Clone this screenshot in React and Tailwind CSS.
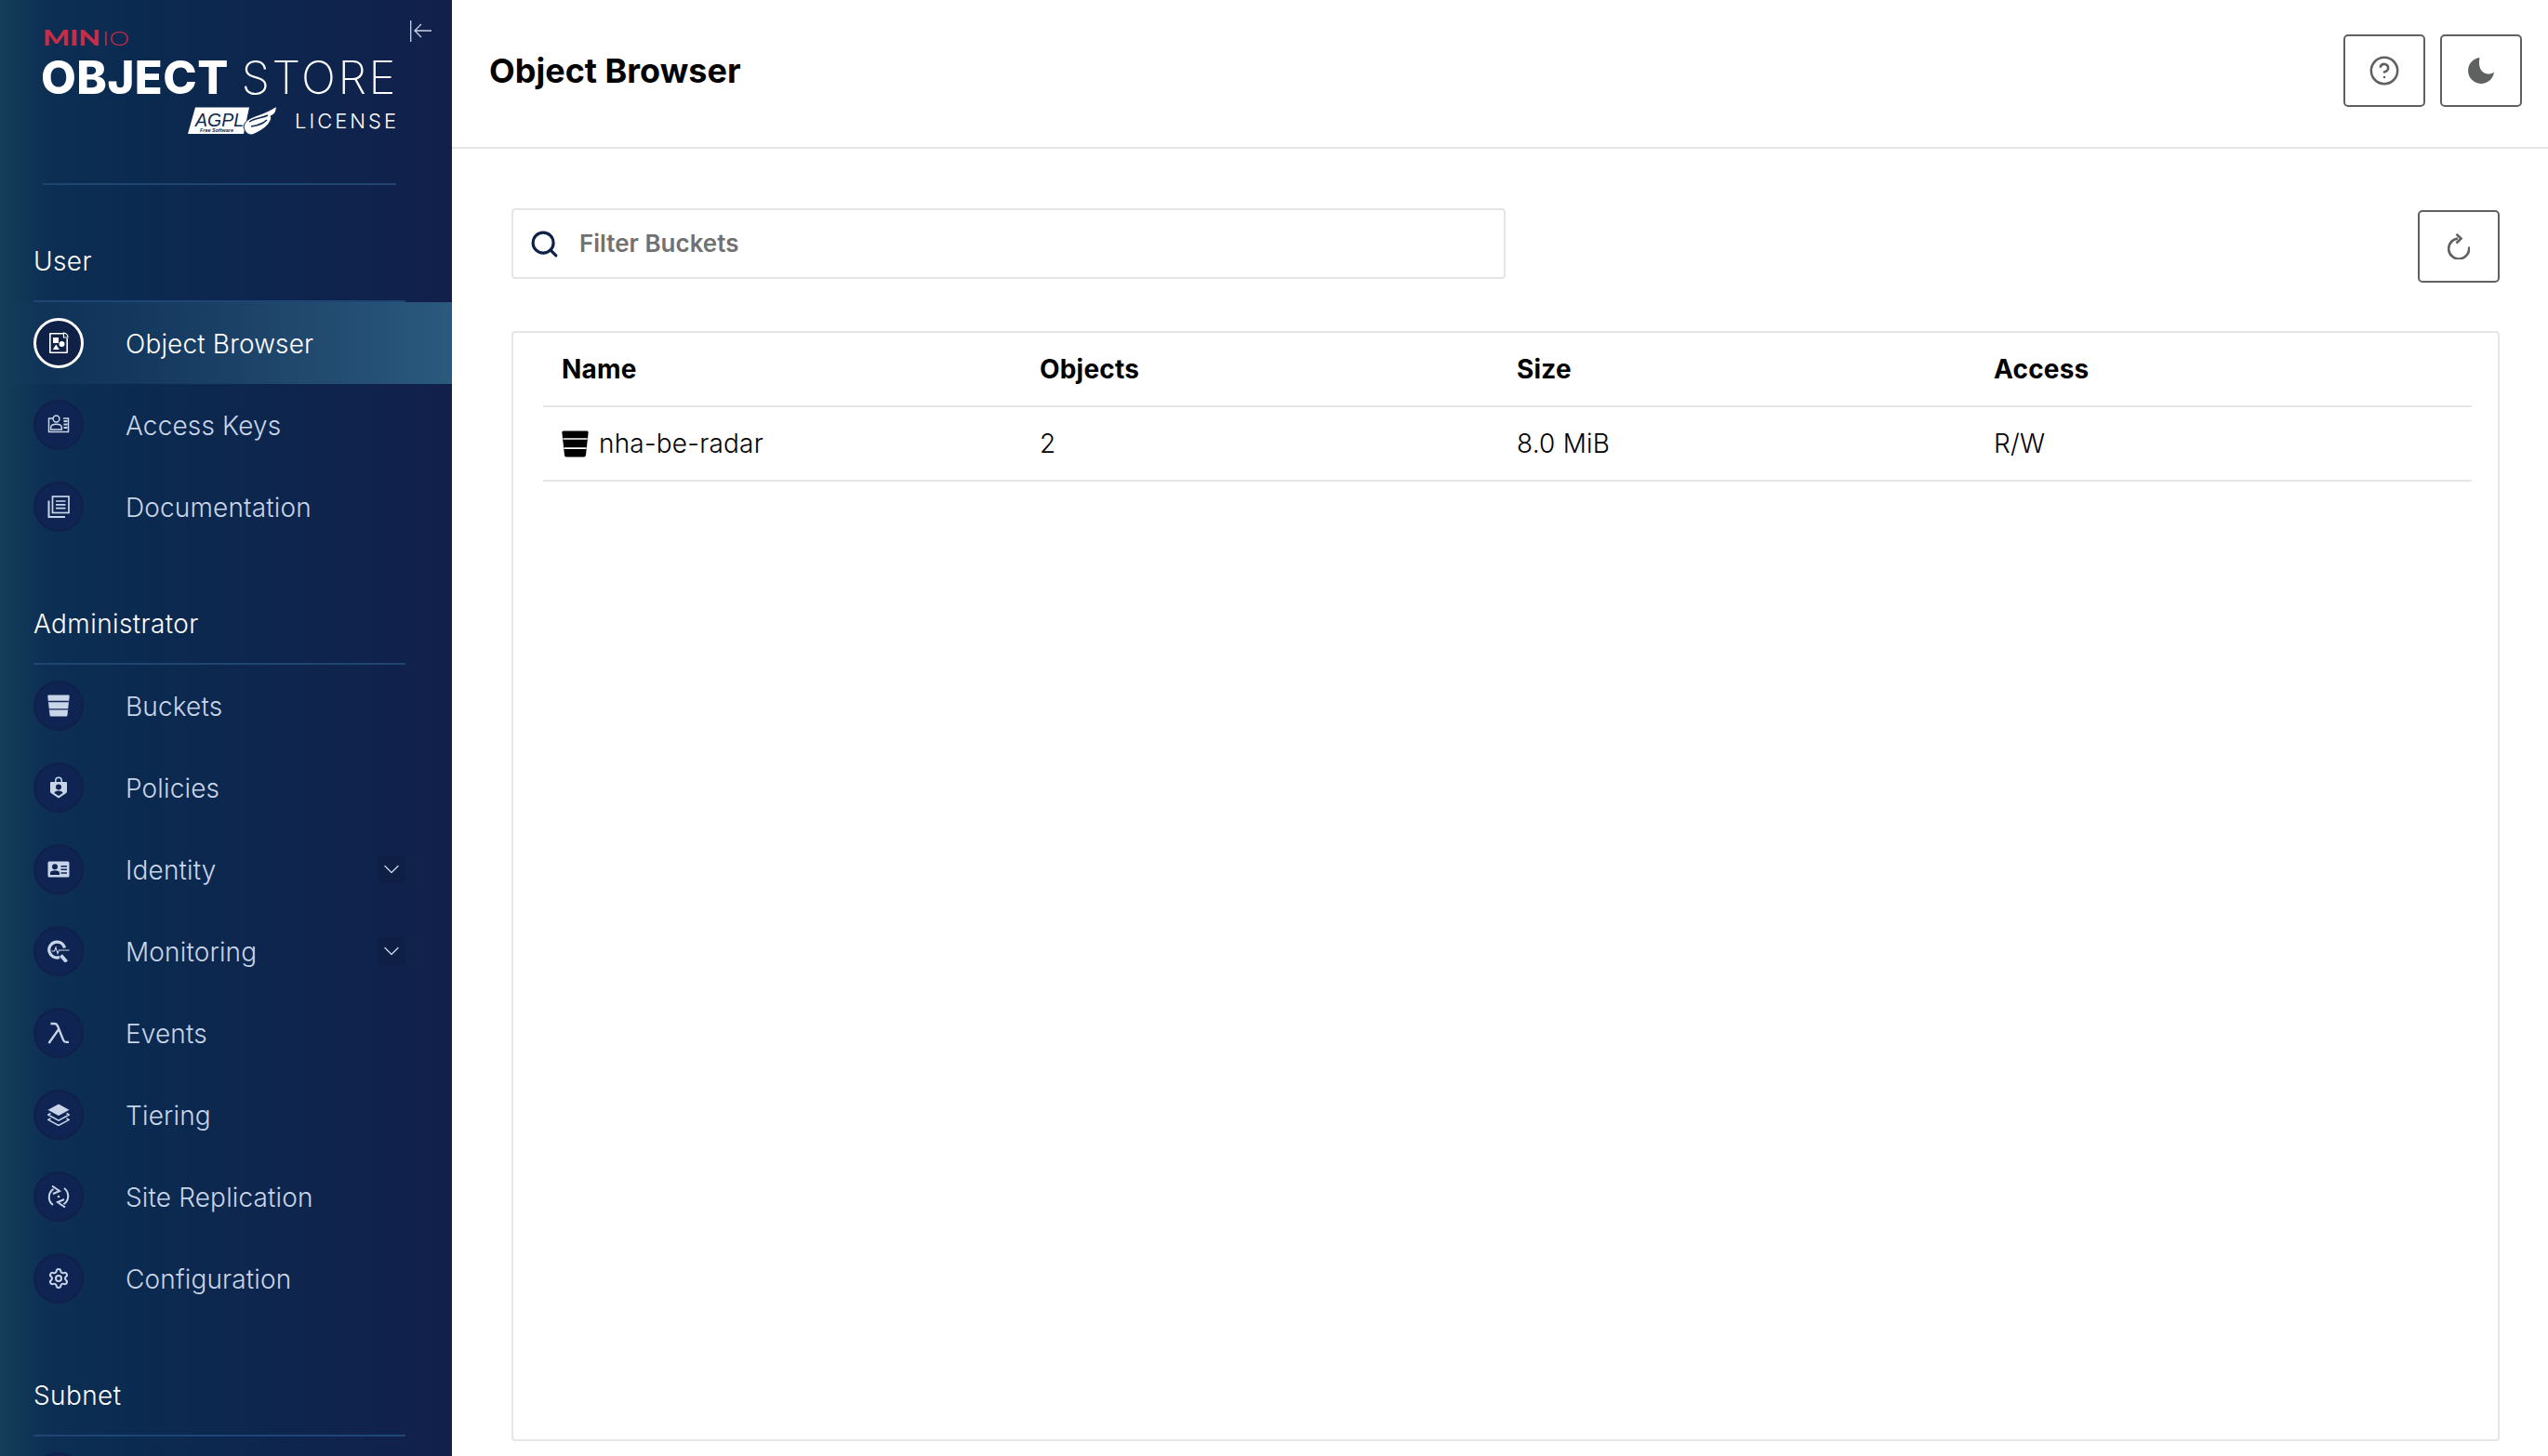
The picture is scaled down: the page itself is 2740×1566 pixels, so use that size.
import React from 'react';
import { ChevronDown, Search, Settings, CircleHelp } from 'lucide-react';

const BucketIcon = ({ className, line }) => (
  <svg viewBox="0 0 24 24" className={className}>
    <path d="M1.500.5h21c.8 0 1.300.6 1.200 1.400l-2.200 20c-.1 1-.8 1.600-1.700 1.600H4.200c-.9 0-1.600-.6-1.700-1.600L.3 1.900C.2 1.100.7.5 1.500.5z" fill="currentColor" />
    <path d="M1.200 7.500h21.600M2 15.800h20" stroke={line} strokeWidth="1.300" fill="none" />
  </svg>
);

const ObjectIcon = ({ className }) => (
  <svg viewBox="0 0 24 24" className={className} fill="currentColor">
    <path d="M2 1h15.500v1.600H3.600v18.800h16.800V7H22v15a1 1 0 0 1-1 1H3a1 1 0 0 1-1-1V2a1 1 0 0 1 1-1z" />
    <path d="M17.500 1.200a4.500 4.500 0 0 1 4.500 4.800h-4.500z" fill="none" stroke="currentColor" strokeWidth="1.200" />
    <rect x="6" y="6" width="6" height="6" />
    <circle cx="15.500" cy="13" r="3" />
    <path d="M9.300 13.500l3.500 5.500H5.800z" />
  </svg>
);

const KeysIcon = ({ className }) => (
  <svg viewBox="0 0 24 24" className={className} fill="none" stroke="currentColor" strokeWidth="1.500">
    <path d="M6 5H1.500v14.500h21V5H17" />
    <circle cx="9.500" cy="5.500" r="3.400" />
    <path d="M3.700 17v-2.200c0-2.200 2.400-3.600 5.800-3.600s5.800 1.400 5.800 3.600V17z" />
    <path d="M17.500 8h4M17.500 11.500h4M17.500 15h4" strokeWidth="1.800" />
  </svg>
);

const DocsIcon = ({ className }) => (
  <svg viewBox="0 0 24 24" className={className} fill="none" stroke="currentColor" strokeWidth="1.700">
    <rect x="5.500" y="1" width="17.500" height="17.500" />
    <path d="M9 6h10.500M9 9.800h10.500M9 13.600h10.500" />
    <path d="M1.500 5.500v17.500h17.500" strokeWidth="2" />
  </svg>
);

const PolicyIcon = ({ className }) => (
  <svg viewBox="0 0 24 24" className={className} fill="currentColor">
    <path d="M8 6V4.600a4 4 0 0 1 8 0V6h-1.500V4.600a2.500 2.500 0 0 0-5 0V6z" />
    <path fillRule="evenodd" d="M4 6h16c.6 0 1 .4 1 1v9.500c0 .6-.3 1.100-.8 1.400L12 23.500 3.800 17.900c-.5-.3-.8-.8-.8-1.400V7c0-.6.4-1 1-1zm8 2.500a3 3 0 1 0 0 6 3 3 0 0 0 0-6zm0 7c-2.800 0-4.500 1-4.500 2.500L12 21l4.500-3c0-1.500-1.700-2.500-4.500-2.500z" />
  </svg>
);

const IdentityIcon = ({ className }) => (
  <svg viewBox="0 0 24 24" className={className} fill="currentColor">
    <path fillRule="evenodd" d="M2 3.500h20a1.500 1.500 0 0 1 1.500 1.500v14a1.500 1.500 0 0 1-1.500 1.500H2A1.500 1.500 0 0 1 .5 19V5A1.500 1.500 0 0 1 2 3.500zM8 6.200a3 3 0 1 0 0 6 3 3 0 0 0 0-6zm0 7c-3.200 0-5 1-5 2.800v2h10v-2c0-1.800-1.800-2.800-5-2.800zM14.500 8v1.500H21V8zm0 3.600v1.500H21v-1.500zm0 3.600v1.500H21v-1.500z" />
  </svg>
);

const MonitorIcon = ({ className }) => (
  <svg viewBox="0 0 24 24" className={className} fill="none" stroke="currentColor">
    <path d="M18.500 8.500A8.500 8.500 0 1 0 13 18.600" strokeWidth="3.200" />
    <path d="M14.500 16.500l6 7" strokeWidth="3.800" />
    <path d="M4.500 12h3l1.500-4 2 6.500 1.500-3.500h11" strokeWidth="1.100" />
  </svg>
);

const LambdaIcon = ({ className }) => (
  <svg viewBox="0 0 24 24" className={className} fill="none" stroke="currentColor" strokeWidth="2.300">
    <path d="M3.500 2h4.500c1.500 0 2.200.7 2.900 2.300L17 19.500c.7 1.600 1.500 2.300 2.800 2.300H23M11.800 8.500L1.500 23" />
  </svg>
);

const TierIcon = ({ className }) => (
  <svg viewBox="0 0 24 24" className={className}>
    <path d="M12 .5L23.500 6.700 12 13 .5 6.700z" fill="currentColor" />
    <path d="M3.500 10.500L.8 12 12 18.200 23.200 12l-2.700-1.500M3.500 16L.8 17.400 12 23.500l11.200-6.100L20.500 16" fill="none" stroke="currentColor" strokeWidth="1.500" />
  </svg>
);

const ReplicationIcon = ({ className }) => (
  <svg viewBox="0 0 24 24" className={className} fill="none" stroke="currentColor" strokeWidth="2">
    <path d="M6.500 3.800A10.500 10.500 0 0 0 6 21M17.500 20.200A10.500 10.500 0 0 0 18 3" />
    <path d="M5 .5l8 5.500-7 3M19 23.500l-8-5.500 7-3" strokeWidth="2" />
    <circle cx="12" cy="12" r="1.300" fill="currentColor" stroke="none" />
  </svg>
);

const CollapseIcon = () => (
  <svg viewBox="0 0 23 23" className="absolute left-[441px] top-[22px] w-[23px] h-[23px] text-[#c8d5e8]" fill="none" stroke="currentColor" strokeWidth="1.300">
    <path d="M.7 0v23M23 11H5M12 4l-7 7 7 7" />
  </svg>
);

const MoonIcon = ({ className }) => (
  <svg viewBox="0 0 28 28" className={className} fill="currentColor">
    <path d="M12.500 0a14 14 0 1 0 15.500 15.500C25.500 17.500 22.500 18 20 17.300 14 16 10.500 10 12.500 0z" />
  </svg>
);

const RefreshIcon = ({ className }) => (
  <svg viewBox="0 0 24 28" className={className} fill="none" stroke="currentColor" strokeWidth="2.600">
    <path d="M11 5.500A11 11 0 1 0 23 14.500" />
    <path d="M9.500 .8L14.500 5.500 9.500 10.500" />
  </svg>
);

const LogoMark = () => (
  <div className="flex flex-col w-[380px] text-white">
    <svg viewBox="0 0 92 24" className="w-[92px] h-[24px] -mt-[4px] text-[#c72c48] overflow-visible">
      <text x="0" y="19.500" fontFamily="Lato, sans-serif" fontWeight="900" fontSize="22" fill="currentColor" textLength="62" lengthAdjust="spacingAndGlyphs">MIN</text>
      <text x="64" y="19.500" fontFamily="Lato, sans-serif" fontWeight="300" fontSize="22" fill="currentColor" textLength="29" lengthAdjust="spacingAndGlyphs">IO</text>
    </svg>
    <div className="flex items-center justify-between mt-[9px] -ml-[2px] -mr-[2px] h-[44px] leading-[44px] text-[49px] whitespace-nowrap">
      <span className="font-extrabold tracking-[0.5px]">OBJECT</span>
      <span className="font-extralight tracking-[2.500px]">STORE</span>
    </div>
    <div className="flex items-center justify-end mt-[8px] h-[32px] -mr-[3px]">
      <svg viewBox="0 0 96 32" className="w-[96px] h-[32px]">
        <path d="M8 1.500h58L60 30H0z" fill="#fff" />
        <text x="8" y="22" fontFamily="Liberation Sans, sans-serif" fontStyle="italic" fontSize="20" fill="#0d2a50" textLength="52" lengthAdjust="spacingAndGlyphs">AGPL</text>
        <text x="13" y="28" fontFamily="Liberation Sans, sans-serif" fontStyle="italic" fontWeight="700" fontSize="4.500" fill="#0d2a50" textLength="36" lengthAdjust="spacingAndGlyphs">Free Software</text>
        <path d="M60 22C63 10 78 12 95 .5c1 6-3 9-6 10.500 2 3-2 13-20 20-5 0-8-3-9-9z" fill="#fff" stroke="#0d2a50" strokeWidth="1" />
        <path d="M66 17c6-4 14-4 20-7M68 22c6-1 12-2 17-7" fill="none" stroke="#0d2a50" strokeWidth="1.500" />
      </svg>
      <span className="ml-[19px] text-[22px] leading-[30px] font-light tracking-[3px]">LICENSE</span>
    </div>
  </div>
);

const NavItem = ({ icon: Icon, label, active, expandable }) => (
  <div className={`flex items-center h-[88px] pl-[36px] pr-[50px] ${active ? 'bg-gradient-to-r from-transparent to-[#2a5a7e] text-white' : 'text-[#c8d5e8]'}`}>
    <div className={`flex items-center justify-center w-[54px] h-[54px] rounded-full shrink-0 ${active ? 'bg-[#0f2147] border-[3px] border-white' : 'bg-[#0f2452] border-[2px] border-[#0e2149]'}`}>
      <Icon className="w-[24px] h-[24px]" />
    </div>
    {label && <span className={`ml-[45px] mt-[2px] text-[28px] font-light tracking-[0.15px] whitespace-nowrap ${active ? 'text-white' : ''}`}>{label}</span>}
    {expandable && (
      <div className="ml-auto flex items-center justify-center w-[30px] h-[30px] rounded-[3px] bg-[#0e1e44]">
        <ChevronDown className="w-[28px] h-[28px]" strokeWidth={1.200} />
      </div>
    )}
  </div>
);

const Section = ({ title, items }) => (
  <div className="mt-[61px]">
    <div className="px-[36px] h-[40px] leading-[42px] text-[28px] font-light tracking-[0.4px] text-white">{title}</div>
    <div className="mx-[36px] mt-[23px] w-[400px] h-[2px] bg-[#1f4672]" />
    {items.map((item, i) => (
      <NavItem key={i} {...item} />
    ))}
  </div>
);

const userItems = [
  { label: 'Object Browser', icon: ObjectIcon, active: true },
  { label: 'Access Keys', icon: KeysIcon },
  { label: 'Documentation', icon: DocsIcon },
];

const BucketNavIcon = ({ className }) => <BucketIcon className={className} line="#0f2452" />;

const adminItems = [
  { label: 'Buckets', icon: BucketNavIcon },
  { label: 'Policies', icon: PolicyIcon },
  { label: 'Identity', icon: IdentityIcon, expandable: true },
  { label: 'Monitoring', icon: MonitorIcon, expandable: true },
  { label: 'Events', icon: LambdaIcon },
  { label: 'Tiering', icon: TierIcon },
  { label: 'Site Replication', icon: ReplicationIcon },
  { label: 'Configuration', icon: Settings },
];

const IconButton = ({ children }) => (
  <button className="flex items-center justify-center w-[88px] h-[78px] rounded-[5px] border-2 border-[#5e6160] text-[#5e6160] bg-white">
    {children}
  </button>
);

const columns = ['Name', 'Objects', 'Size', 'Access'];

const App = () => {
  return (
    <div className="flex w-full h-screen overflow-hidden bg-white font-[Inter,sans-serif]">
      <aside className="relative w-[486px] shrink-0 h-full overflow-hidden bg-[linear-gradient(90deg,#143e59_0%,#0d2f54_10%,#0b2a50_30%,#11204a_100%)]">
        <CollapseIcon />
        <div className="h-[197px] pl-[46px] pt-[33px]">
          <LogoMark />
        </div>
        <div className="ml-[46px] w-[380px] h-[2px] bg-[#1f4672]" />
        <Section title="User" items={userItems} />
        <Section title="Administrator" items={adminItems} />
        <Section title="Subnet" items={[{ label: '', icon: KeysIcon }]} />
      </aside>

      <main className="flex-1 flex flex-col min-w-0">
        <header className="flex items-center justify-between h-[160px] shrink-0 border-b-2 border-[#e5e5e5] pl-[40px] pr-[28px] pb-[7px]">
          <h1 className="text-[36px] font-bold text-black">Object Browser</h1>
          <div className="flex gap-[16px]">
            <IconButton><CircleHelp className="w-[34px] h-[34px]" strokeWidth={1.800} /></IconButton>
            <IconButton><MoonIcon className="w-[28px] h-[28px]" /></IconButton>
          </div>
        </header>

        <div className="flex-1 flex flex-col pl-[64px] pr-[52px] pt-[64px] pb-[16px] min-h-0">
          <div className="flex items-start justify-between">
            <div className="flex items-center w-[1069px] h-[76px] rounded-[4px] border-2 border-[#e5e5e5] pl-[17px]">
              <Search className="w-[33px] h-[33px] text-[#0f2147]" strokeWidth={2.300} />
              <span className="ml-[21px] -mt-[1px] text-[26px] font-semibold text-[#717171]">Filter Buckets</span>
            </div>
            <div className="mt-[2px]">
              <IconButton><RefreshIcon className="w-[24px] h-[28px]" /></IconButton>
            </div>
          </div>

          <div className="flex-1 mt-[52px] rounded-[4px] border-2 border-[#e5e5e5] pl-[32px] pr-[28px]">
            <div className="grid grid-cols-[514px_513px_513px_1fr] h-[80px] items-center pl-[20px] border-b-2 border-[#e5e5e5] text-[28px] font-bold tracking-[0.2px] text-black">
              {columns.map(col => (
                <span key={col}>{col}</span>
              ))}
            </div>
            <div className="grid grid-cols-[514px_513px_513px_1fr] h-[80px] items-center pl-[20px] border-b-2 border-[#e5e5e5] text-[28px] font-light tracking-[0.2px] text-black">
              <span className="flex items-center">
                <BucketIcon className="w-[29px] h-[29px] mr-[11px]" line="#fff" />
                nha-be-radar
              </span>
              <span>2</span>
              <span>8.0 MiB</span>
              <span>R/W</span>
            </div>
          </div>
        </div>
      </main>
    </div>
  );
};

export default App;
